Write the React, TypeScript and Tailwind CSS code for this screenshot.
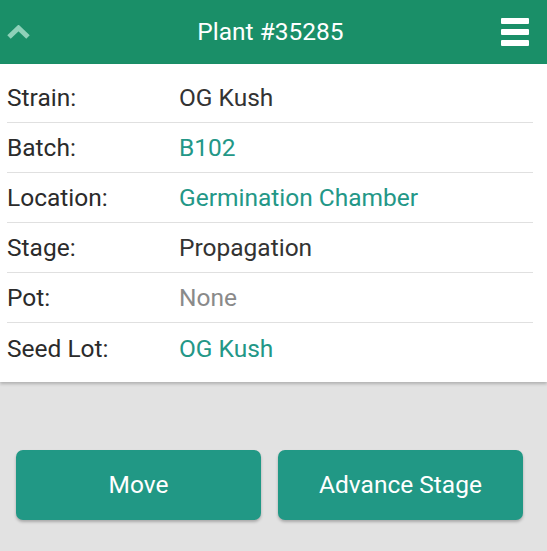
import React from "react";

const rows: { label: string; value: string; kind: "text" | "link" | "muted" }[] = [
  { label: "Strain:", value: "OG Kush", kind: "text" },
  { label: "Batch:", value: "B102", kind: "link" },
  { label: "Location:", value: "Germination Chamber", kind: "link" },
  { label: "Stage:", value: "Propagation", kind: "text" },
  { label: "Pot:", value: "None", kind: "muted" },
  { label: "Seed Lot:", value: "OG Kush", kind: "link" },
];

export default function App() {
  return (
    <div
      className="w-[547px] h-[551px] bg-[#e2e2e2] flex flex-col overflow-hidden"
      style={{ fontFamily: "Roboto, 'Noto Sans', sans-serif" }}
    >
      <header className="h-[64px] bg-[#1a8f68] flex items-center shrink-0">
        <div className="w-[60px] pl-[7px] flex items-center">
          <svg width="23" height="14" viewBox="0 0 23 14">
            <path d="M2 12 L11.5 3 L21 12" fill="none" stroke="#8fd1b9" strokeWidth="5" strokeLinejoin="miter" />
          </svg>
        </div>
        <h1 className="flex-1 text-center text-white text-[24.5px] leading-none pr-[6px]">Plant #35285</h1>
        <div className="w-[60px] flex justify-end pr-[18px]">
          <div className="flex flex-col gap-[5px]">
            <span className="block w-[28px] h-[6px] bg-white rounded-[1px]" />
            <span className="block w-[28px] h-[6px] bg-white rounded-[1px]" />
            <span className="block w-[28px] h-[6px] bg-white rounded-[1px]" />
          </div>
        </div>
      </header>

      <section className="bg-white pt-[9px] pb-[9px] shadow-[0_2px_3px_rgba(0,0,0,0.22)] shrink-0">
        {rows.map((r, i) => (
          <div
            key={r.label}
            className={`ml-[7px] mr-[14px] flex items-center pt-[2px] ${i < rows.length - 1 ? "h-[50px] border-b border-[#e0e0e0]" : "h-[50px]"}`}
          >
            <span className="w-[172px] text-[24.5px] text-[#2b2b2b]">{r.label}</span>
            <span
              className={`text-[24.5px] ${
                r.kind === "link" ? "text-[#239787]" : r.kind === "muted" ? "text-[#8a8a8a]" : "text-[#333333]"
              }`}
            >
              {r.value}
            </span>
          </div>
        ))}
      </section>

      <div className="flex pl-[16px] gap-[17px] mt-[68px]">
        <button className="w-[245px] h-[70px] rounded-[7px] bg-[#219885] text-white text-[24.5px] shadow-[0_2px_3px_rgba(0,0,0,0.25)]">
          Move
        </button>
        <button className="w-[245px] h-[70px] rounded-[7px] bg-[#219885] text-white text-[24.5px] shadow-[0_2px_3px_rgba(0,0,0,0.25)]">
          Advance Stage
        </button>
      </div>
    </div>
  );
}
